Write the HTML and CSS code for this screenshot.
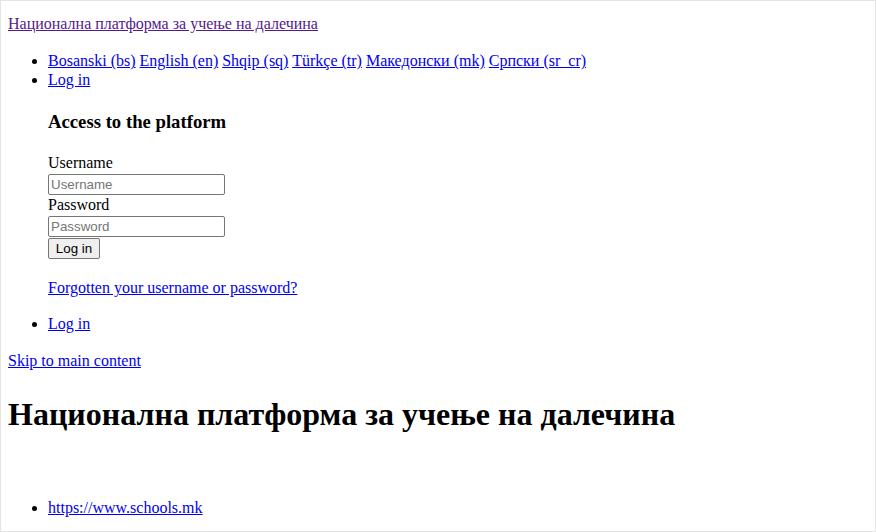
FILE: index.html
```html
<!DOCTYPE html>
<html>
<head>
<meta charset="utf-8">
<link rel="stylesheet" href="styles.css">
</head>
<body>
<div class="brand"><a class="visited" href="#">Национална платформа за учење на далечина</a></div>
<ul class="nav">
<li><a href="#">Bosanski ‎(bs)‎</a> <a href="#">English ‎(en)‎</a> <a href="#">Shqip ‎(sq)‎</a> <a href="#">Türkçe ‎(tr)‎</a> <a href="#">Македонски ‎(mk)‎</a> <a href="#">Српски ‎(sr_cr)‎</a></li>
<li><a href="#">Log in</a>
<div class="login-box">
<h3 class="login-title">Access to the platform</h3>
<form class="login-form">
<label class="field-label" for="u">Username</label>
<input class="field" id="u" type="text" placeholder="Username">
<label class="field-label" for="p">Password</label>
<input class="field" id="p" type="password" placeholder="Password">
<button class="login-btn" type="button">Log in</button>
</form>
<p class="forgot"><a href="#">Forgotten your username or password?</a></p>
</div>
</li>
<li><a href="#">Log in</a></li>
</ul>
<div class="skip"><a href="#">Skip to main content</a></div>
<h1 class="page-title">Национална платформа за учење на далечина</h1>
<ul class="footer-links">
<li><a href="#">https://www.schools.mk</a></li>
</ul>
</body>
</html>
```

FILE: styles.css
```css
html {
  border: 1px solid #e4e4e4;
  min-height: 100%;
  box-sizing: border-box;
  background: #ffffff;
}
body {
  margin: 7px 7px 0;
  font-family: "Liberation Serif", "Times New Roman", serif;
  font-size: 16px;
  line-height: 1.15;
  color: #000000;
}
a {
  color: #0000ee;
}
a.visited {
  color: #551a8b;
}
.brand {
  margin-top: 7px;
}
.nav {
  margin: 19px 0 18.5px;
  padding-left: 40px;
}
.login-title {
  font-size: 18.72px;
  line-height: 1.15;
  font-weight: bold;
  margin: 22px 0 21px;
}
.login-form {
  margin: 0;
}
.field-label {
  display: block;
}
.field {
  display: block;
  box-sizing: border-box;
  width: 177px;
  height: 21px;
  margin: 2px 0 1px;
  padding: 1px 2px;
  border: 1px solid #767676;
  border-radius: 2px;
  font-family: "Liberation Sans", Arial, sans-serif;
  font-size: 13.333px;
  color: #000;
  background: #fff;
}
.field::placeholder {
  color: #757575;
}
.login-btn {
  display: block;
  box-sizing: border-box;
  width: 52px;
  height: 21px;
  margin: 0;
  padding: 1px 6px;
  border: 1px solid #767676;
  border-radius: 2px;
  background: #efefef;
  font-family: "Liberation Sans", Arial, sans-serif;
  font-size: 13.333px;
  color: #000;
}
.forgot {
  margin: 19.5px 0 18px;
}
.page-title {
  font-size: 32px;
  line-height: 1.15;
  font-weight: bold;
  margin: 25.3px 0 24px;
}
.footer-links {
  margin: 66px 0 0;
  padding-left: 40px;
}
```
